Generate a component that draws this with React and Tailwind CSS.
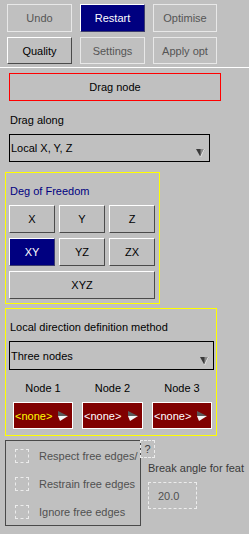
import React from 'react';

const DisabledBtn = ({ children, className = '' }) => (
  <div className={`flex items-center justify-center border border-[#e8e8e8] text-[#555555] ${className}`}>
    {children}
  </div>
);

const RaisedBtn = ({ children, active = false, className = '' }) => (
  <div
    className={`flex items-center justify-center border border-t-white border-l-white ${
      active
        ? 'bg-[#000080] text-white border-r-[#3c3c6c] border-b-[#3c3c6c]'
        : 'text-black border-r-[#4a4a4a] border-b-[#4a4a4a]'
    } ${className}`}
  >
    {children}
  </div>
);

const DropArrow = () => (
  <svg width="9" height="8" viewBox="0 0 9 8" className="absolute right-[4px] bottom-[4px]">
    <polygon points="0,0 9,0 4.5,8" fill="#3a3a3a" />
    <polygon points="4.5,0 9,0 4.5,8" fill="#8a8a8a" />
    <line x1="8.5" y1="0" x2="4.5" y2="8" stroke="#f0f0f0" strokeWidth="1" />
  </svg>
);

const Dropdown = ({ label, className = '' }) => (
  <div className={`relative flex items-center border border-black text-black ${className}`}>
    <span className="pl-[1px]">{label}</span>
    <DropArrow />
  </div>
);

const NodeArrow = () => (
  <svg width="10" height="10" viewBox="0 0 10 10">
    <polygon points="0,0 10,5 0,5" fill="#5a5a5a" />
    <polygon points="0,5 10,5 2,10" fill="#f4f4f4" />
  </svg>
);

const NodePick = ({ yellow = false }) => (
  <div className="flex h-[27px] items-center justify-between border border-white bg-[#800000] pl-[1px] pr-[4px]">
    <span className={yellow ? 'text-[#ffff00]' : 'text-white'}>&lt;none&gt;</span>
    <NodeArrow />
  </div>
);

const CheckRow = ({ label }) => (
  <div className="flex h-[28px] items-center whitespace-nowrap">
    <div className="ml-[9px] h-[14px] w-[14px] shrink-0 border border-dashed border-[#ececec]" />
    <span className="ml-[10px] text-[#505050]">{label}</span>
  </div>
);

export default function App() {
  return (
    <div className="h-[534px] w-[249px] overflow-hidden bg-[#c0c0c0] pt-[4px] font-['Liberation_Sans',Arial,sans-serif] text-[11px] leading-[14px]">
      {/* Top toolbar */}
      <div className="flex h-[28px] gap-[8px] pl-[7px]">
        <DisabledBtn className="w-[65px]">Undo</DisabledBtn>
        <RaisedBtn active className="w-[65px]">Restart</RaisedBtn>
        <DisabledBtn className="w-[64px]">Optimise</DisabledBtn>
      </div>
      <div className="mt-[5px] flex h-[27px] gap-[8px] pl-[7px]">
        <RaisedBtn className="w-[65px]">Quality</RaisedBtn>
        <DisabledBtn className="w-[65px]">Settings</DisabledBtn>
        <DisabledBtn className="w-[64px]">Apply opt</DisabledBtn>
      </div>
      <div className="mt-[3px] h-px bg-white" />

      <div className="ml-[9px] mt-[5px] flex h-[28px] w-[212px] items-center justify-center border border-[#ff0000] text-black">
        Drag node
      </div>

      <div className="ml-[10px] mt-[12px] text-black">Drag along</div>
      <Dropdown label="Local X, Y, Z" className="ml-[9px] mt-[7px] h-[28px] w-[201px]" />

      {/* Degrees of freedom */}
      <div className="ml-[5px] mt-[10px] h-[132px] w-[155px] border border-[#ffff00]">
        <div className="ml-[4px] mt-[11px] text-[#000080]">Deg of Freedom</div>
        <div className="ml-[3px] mt-[7px] grid w-[146px] grid-cols-3 gap-x-[4px] gap-y-[5px]">
          <RaisedBtn className="h-[28px]">X</RaisedBtn>
          <RaisedBtn className="h-[28px]">Y</RaisedBtn>
          <RaisedBtn className="h-[28px]">Z</RaisedBtn>
          <RaisedBtn active className="h-[28px]">XY</RaisedBtn>
          <RaisedBtn className="h-[28px]">YZ</RaisedBtn>
          <RaisedBtn className="h-[28px]">ZX</RaisedBtn>
          <RaisedBtn className="col-span-3 h-[28px]">XYZ</RaisedBtn>
        </div>
      </div>

      {/* Local direction */}
      <div className="ml-[5px] mt-[4px] h-[128px] w-[212px] border border-[#ffff00]">
        <div className="ml-[4px] mt-[11px] text-black">Local direction definition method</div>
        <Dropdown label="Three nodes" className="ml-[3px] mt-[7px] h-[29px] w-[205px]" />
        <div className="ml-[7px] mt-[11px] grid w-[199px] grid-cols-[60px_61px_60px] gap-x-[9px] text-center text-black">
          <div>Node 1</div>
          <div>Node 2</div>
          <div>Node 3</div>
        </div>
        <div className="ml-[7px] mt-[7px] grid w-[199px] grid-cols-[60px_61px_60px] gap-x-[9px]">
          <NodePick yellow />
          <NodePick />
          <NodePick />
        </div>
      </div>

      {/* Free edges */}
      <div className="mt-[4px] flex">
        <div className="ml-[5px] h-[86px] w-[136px] overflow-hidden border border-[#4a4a4a] pt-[1px]">
          <CheckRow label="Respect free edges/" />
          <CheckRow label="Restrain free edges" />
          <CheckRow label="Ignore free edges" />
        </div>
        <div className="-ml-px flex flex-col">
          <div className="flex h-[18px] w-[15px] items-center justify-center border border-dashed border-[#ececec] text-[#404040]">
            ?
          </div>
          <div className="ml-[8px] mt-[3px] whitespace-nowrap text-[#3a3a3a]">Break angle for feat</div>
          <div className="ml-[8px] mt-[7px] flex h-[27px] w-[49px] items-center border border-dashed border-[#ececec] pl-[9px] text-[#505050]">
            20.0
          </div>
        </div>
      </div>
    </div>
  );
}
